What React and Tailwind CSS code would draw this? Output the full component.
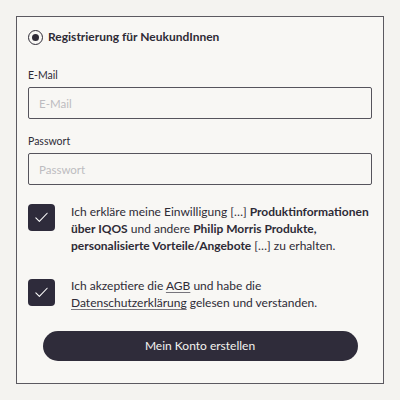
import React from 'react';

const Check = () => (
  <svg viewBox="0 0 24 24" className="w-[17px] h-[17px]" fill="none" stroke="#ffffff" strokeWidth="1.5" strokeLinecap="round" strokeLinejoin="round">
    <path d="M4 12.5l5 5L20 6" />
  </svg>
);

const Field = ({ label, placeholder, className }) => (
  <div className={`flex flex-col ${className}`}>
    <label className="text-[10.5px] text-[#2e2b36] leading-[14px] mb-[5px]">{label}</label>
    <input
      placeholder={placeholder}
      className="h-[32px] w-full border border-[#56545c] rounded-[2px] bg-[#f8f7f4] px-[10px] text-[11.5px] placeholder:text-[#bdbcc0] outline-none"
    />
  </div>
);

const Box = () => (
  <div className="w-[27px] h-[27px] shrink-0 rounded-[4px] bg-[#2e2b3b] flex items-center justify-center">
    <Check />
  </div>
);

export default function App() {
  return (
    <div className="w-[400px] h-[400px] bg-[#f4f3f0] p-[16px] font-['Lato',sans-serif] text-[#2e2b36]">
      <div className="h-[368px] border border-[#5b5960] bg-[#f8f7f4] px-[11px] pt-[11px]">
        {/* radio + heading */}
        <div className="flex items-center gap-[5px] h-[18px]">
          <div className="w-[15px] h-[15px] rounded-full border-[1.5px] border-[#2e2b36] flex items-center justify-center">
            <div className="w-[7px] h-[7px] rounded-full bg-[#2e2b36]" />
          </div>
          <span className="text-[12px] font-bold">Registrierung für NeukundInnen</span>
        </div>

        <Field className="mt-[22px]" label="E-Mail" placeholder="E-Mail" />
        <Field className="mt-[15px]" label="Passwort" placeholder="Passwort" />

        {/* consents */}
        <div className="mt-[19px] flex items-start gap-[16px]">
          <Box />
          <p className="text-[12px] leading-[17px] -mt-[1.5px] whitespace-nowrap">
            Ich erkläre meine Einwilligung […] <b>Produktinformationen</b>
            <br />
            <b>über IQOS</b> und andere <b>Philip Morris Produkte,</b>
            <br />
            <b>personalisierte Vorteile/Angebote</b> […] zu erhalten.
          </p>
        </div>

        <div className="mt-[25px] flex items-start gap-[16px]">
          <Box />
          <p className="text-[12px] leading-[17px] -mt-[1.5px] whitespace-nowrap">
            Ich akzeptiere die <span className="underline underline-offset-2 decoration-[#77757c]">AGB</span> und habe die
            <br />
            <span className="underline underline-offset-2 decoration-[#77757c]">Datenschutzerklärung</span> gelesen und verstanden.
          </p>
        </div>

        <div className="mt-[20px] flex justify-center">
          <button className="w-[315px] h-[30px] rounded-full bg-[#2f2c3a] text-[#f4f3f0] text-[12px]">
            Mein Konto erstellen
          </button>
        </div>
      </div>
    </div>
  );
}
